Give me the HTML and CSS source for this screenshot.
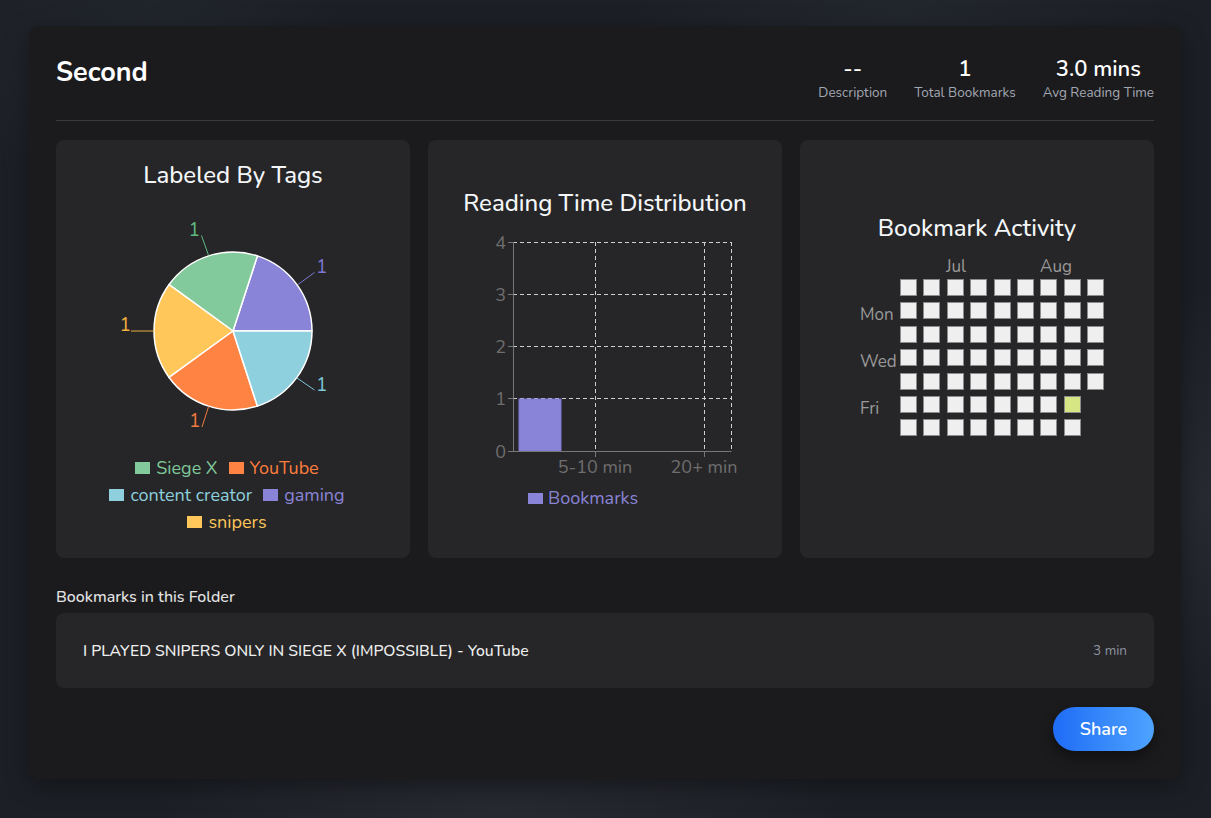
FILE: index.html
```html
<!DOCTYPE html>
<html lang="en">
<head>
<meta charset="utf-8">
<title>Second</title>
<link rel="stylesheet" href="styles.css">
</head>
<body>
<div class="page">
  <main class="panel">
    <header class="header">
      <h1 class="folder-title">Second</h1>
      <div class="stats">
        <div class="stat"><div class="stat-value">--</div><div class="stat-label">Description</div></div>
        <div class="stat"><div class="stat-value">1</div><div class="stat-label">Total Bookmarks</div></div>
        <div class="stat"><div class="stat-value">3.0 mins</div><div class="stat-label">Avg Reading Time</div></div>
      </div>
    </header>

    <section class="cards">
      <div class="card card-tags">
        <h2 class="card-title">Labeled By Tags</h2>
        <svg class="pie" width="354" height="262" viewBox="0 0 354 262">
          <g stroke="#ffffff" stroke-width="1.5" stroke-linejoin="round">
            <path d="M177,144 L256,144 A79,79 0 0 0 201.41,68.87 Z" fill="#8a84d8"/>
            <path d="M177,144 L201.41,68.87 A79,79 0 0 0 113.09,97.56 Z" fill="#82c99c"/>
            <path d="M177,144 L113.09,97.56 A79,79 0 0 0 113.09,190.44 Z" fill="#ffc75a"/>
            <path d="M177,144 L113.09,190.44 A79,79 0 0 0 201.41,219.13 Z" fill="#ff8443"/>
            <path d="M177,144 L201.41,219.13 A79,79 0 0 0 256,144 Z" fill="#8ed0de"/>
          </g>
          <g fill="none" stroke-width="1">
            <polyline points="242,97.5 258.5,85.5" stroke="#7d76d0"/>
            <polyline points="152.6,68.5 145.5,48.5" stroke="#5fbb80"/>
            <polyline points="98,144 75,144" stroke="#e9ad3e"/>
            <polyline points="152.6,219.5 146,240" stroke="#f07a3f"/>
            <polyline points="241,191 258.5,203" stroke="#7cc7d8"/>
          </g>
          <g class="pie-num">
            <text x="260" y="85.5" fill="#7d76d0">1</text>
            <text x="144" y="48.5" fill="#5fbb80" text-anchor="end">1</text>
            <text x="75" y="144" fill="#f2b23f" text-anchor="end">1</text>
            <text x="144.5" y="240" fill="#f07a3f" text-anchor="end">1</text>
            <text x="260" y="204" fill="#7cc7d8">1</text>
          </g>
        </svg>
        <div class="legend">
          <div class="legend-row">
            <span class="legend-item c-green"><i class="swatch"></i>Siege X</span>
            <span class="legend-item c-orange"><i class="swatch"></i>YouTube</span>
          </div>
          <div class="legend-row">
            <span class="legend-item c-cyan"><i class="swatch"></i>content creator</span>
            <span class="legend-item c-purple"><i class="swatch"></i>gaming</span>
          </div>
          <div class="legend-row">
            <span class="legend-item c-yellow"><i class="swatch"></i>snipers</span>
          </div>
        </div>
      </div>

      <div class="card card-reading">
        <h2 class="card-title">Reading Time Distribution</h2>
        <svg class="bar" width="354" height="300" viewBox="0 0 354 300">
          <g stroke="#cfcfcf" stroke-width="1" stroke-dasharray="4 3" fill="none">
            <line x1="85" y1="27.5" x2="303.5" y2="27.5"/>
            <line x1="85" y1="79.5" x2="303.5" y2="79.5"/>
            <line x1="85" y1="131.5" x2="303.5" y2="131.5"/>
            <line x1="85" y1="183.5" x2="303.5" y2="183.5"/>
            <line x1="167.5" y1="27" x2="167.5" y2="236"/>
            <line x1="276.5" y1="27" x2="276.5" y2="236"/>
            <line x1="303.5" y1="27" x2="303.5" y2="236"/>
          </g>
          <rect x="91" y="184" width="42" height="52" fill="#8a84d8" stroke="#7f79d0" stroke-width="1"/>
          <g stroke="#777777" stroke-width="1" fill="none">
            <line x1="85.5" y1="27" x2="85.5" y2="236.5"/>
            <line x1="85" y1="236.5" x2="303.5" y2="236.5"/>
            <line x1="80" y1="27.5" x2="85" y2="27.5"/>
            <line x1="80" y1="79.5" x2="85" y2="79.5"/>
            <line x1="80" y1="131.5" x2="85" y2="131.5"/>
            <line x1="80" y1="183.5" x2="85" y2="183.5"/>
            <line x1="80" y1="236.5" x2="85" y2="236.5"/>
            <line x1="167.5" y1="236" x2="167.5" y2="242"/>
            <line x1="276.5" y1="236" x2="276.5" y2="242"/>
          </g>
          <g class="axis-text" text-anchor="end">
            <text x="78" y="34">4</text>
            <text x="78" y="86">3</text>
            <text x="78" y="138">2</text>
            <text x="78" y="190">1</text>
            <text x="78" y="243">0</text>
          </g>
          <g class="axis-text" text-anchor="middle">
            <text x="167" y="258">5-10 min</text>
            <text x="276" y="258">20+ min</text>
          </g>
          <rect x="100" y="278" width="15" height="11" fill="#8a84d8"/>
          <text class="bar-legend" x="120" y="289">Bookmarks</text>
        </svg>
      </div>

      <div class="card card-activity">
        <h2 class="card-title">Bookmark Activity</h2>
        <div class="heatmap">
          <div class="months">
            <span class="month m-jul">Jul</span>
            <span class="month m-aug">Aug</span>
          </div>
          <div class="heat-body">
            <div class="days">
              <span></span><span>Mon</span><span></span><span>Wed</span><span></span><span>Fri</span><span></span>
            </div>
            <div class="cells">
              <i></i><i></i><i></i><i></i><i></i><i></i><i></i><i></i><i></i>
              <i></i><i></i><i></i><i></i><i></i><i></i><i></i><i></i><i></i>
              <i></i><i></i><i></i><i></i><i></i><i></i><i></i><i></i><i></i>
              <i></i><i></i><i></i><i></i><i></i><i></i><i></i><i></i><i></i>
              <i></i><i></i><i></i><i></i><i></i><i></i><i></i><i></i><i></i>
              <i></i><i></i><i></i><i></i><i></i><i></i><i></i><i class="hot"></i><b></b>
              <i></i><i></i><i></i><i></i><i></i><i></i><i></i><i></i><b></b>
            </div>
          </div>
        </div>
      </div>
    </section>

    <h3 class="list-title">Bookmarks in this Folder</h3>
    <ul class="bookmarks">
      <li class="bookmark">
        <span class="bookmark-title">I PLAYED SNIPERS ONLY IN SIEGE X (IMPOSSIBLE) - YouTube</span>
        <span class="bookmark-time">3 min</span>
      </li>
    </ul>

    <div class="actions">
      <button class="share">Share</button>
    </div>
  </main>
</div>
</body>
</html>
```

FILE: styles.css
```css
* { box-sizing: border-box; }

html, body {
  margin: 0;
  padding: 0;
}

body {
  width: 1211px;
  height: 818px;
  overflow: hidden;
  font-family: "Nunito", "Noto Sans", "Open Sans", sans-serif;
  color: #f2f2f2;
  background-color: #1c1f25;
  background-image:
    radial-gradient(ellipse 300px 200px at 150px 60px, rgba(50,55,66,0.35), transparent 70%),
    radial-gradient(ellipse 400px 160px at 900px 20px, rgba(48,52,62,0.35), transparent 70%),
    radial-gradient(ellipse 500px 120px at 500px 810px, rgba(60,62,70,0.35), transparent 70%),
    radial-gradient(ellipse 120px 300px at 1205px 500px, rgba(55,58,66,0.4), transparent 70%);
}

.page {
  padding: 26px 30px 0 29px;
}

.panel {
  background: #1b1b1d;
  border-radius: 10px;
  padding: 30px 27px 28px;
  box-shadow: 0 6px 24px rgba(0,0,0,0.35);
}

.header {
  display: flex;
  justify-content: space-between;
  align-items: flex-start;
  padding-bottom: 18px;
  border-bottom: 1px solid #3c3c40;
}

.folder-title {
  margin: 0;
  font-size: 27px;
  line-height: 33px;
  font-weight: 700;
  color: #ffffff;
}

.stats {
  display: flex;
  gap: 27px;
  padding-top: 1px;
}

.stat {
  display: flex;
  flex-direction: column;
  align-items: center;
  gap: 3px;
}

.stat-value {
  font-size: 22px;
  line-height: 24px;
  font-weight: 600;
  color: #ffffff;
}

.stat-label {
  font-size: 13.5px;
  line-height: 18px;
  color: #a3a7b3;
}

.cards {
  display: grid;
  grid-template-columns: repeat(3, 1fr);
  gap: 18px;
  margin-top: 19px;
}

.card {
  background: #262628;
  border-radius: 8px;
  height: 418px;
  display: flex;
  flex-direction: column;
  align-items: center;
}

.card-title {
  margin: 0;
  font-size: 24px;
  line-height: 28px;
  font-weight: 500;
  color: #f4f6f8;
  text-align: center;
}

.card-tags { padding-top: 21px; }
.card-reading { padding-top: 49px; }
.card-activity { padding-top: 74px; }

.pie, .bar { display: block; margin-top: -2px; }

.pie-num text {
  font-family: "Nunito", "Noto Sans", "Open Sans", sans-serif;
  font-size: 19px;
}

.legend {
  display: flex;
  flex-direction: column;
  align-items: center;
  margin-top: 5px;
  padding-right: 12px;
}

.legend-row {
  display: flex;
  gap: 11px;
  height: 27px;
  align-items: center;
}

.legend-item {
  display: flex;
  align-items: center;
  gap: 6px;
  font-size: 18px;
  line-height: 22px;
}

.swatch {
  display: block;
  width: 15px;
  height: 12px;
  background: currentColor;
}

.c-green { color: #7fc99a; }
.c-green .swatch { background: #82c99c; }
.c-orange { color: #ff7d3b; }
.c-orange .swatch { background: #ff8443; }
.c-cyan { color: #8ed0de; }
.c-purple { color: #8a84d8; }
.c-yellow { color: #ffc75a; }

.axis-text text {
  font-family: "Nunito", "Noto Sans", "Open Sans", sans-serif;
  font-size: 18px;
  fill: #6e6e6e;
}

.bar-legend {
  font-family: "Nunito", "Noto Sans", "Open Sans", sans-serif;
  font-size: 18px;
  fill: #8a84d8;
}

.heatmap {
  align-self: flex-start;
  margin-left: 60px;
  margin-top: 15px;
}

.months {
  position: relative;
  height: 20px;
  margin-left: 40px;
  margin-bottom: 2px;
}

.month {
  position: absolute;
  top: 0;
  font-size: 17px;
  line-height: 20px;
  color: #9a9a9a;
}

.m-jul { left: 46px; }
.m-aug { left: 140px; }

.heat-body {
  display: flex;
}

.days {
  width: 40px;
  display: grid;
  grid-template-rows: repeat(7, 17px);
  row-gap: 6.4px;
}

.days span {
  font-size: 17px;
  line-height: 17px;
  color: #9a9a9a;
  padding-top: 4px;
}

.cells {
  display: grid;
  grid-template-columns: repeat(9, 17px);
  grid-template-rows: repeat(7, 17px);
  gap: 6.4px;
}

.cells i {
  display: block;
  background: #efefef;
  border: 1px solid #8c8c8c;
}

.cells i.hot { background: #d6e685; }

.cells b { display: block; }

.list-title {
  margin: 29px 0 6px;
  font-size: 16px;
  line-height: 20px;
  font-weight: 500;
  color: #e3e3e3;
}

.bookmarks {
  list-style: none;
  margin: 0;
  padding: 0;
}

.bookmark {
  display: flex;
  justify-content: space-between;
  align-items: center;
  height: 75px;
  padding: 0 27px;
  background: #262628;
  border-radius: 8px;
}

.bookmark-title {
  font-size: 15.75px;
  font-weight: 500;
  color: #eeeeee;
}

.bookmark-time {
  font-size: 13.5px;
  color: #8f93a0;
}

.actions {
  display: flex;
  justify-content: flex-end;
  margin-top: 19px;
}

.share {
  width: 101px;
  height: 44px;
  border: 0;
  border-radius: 22px;
  background: linear-gradient(90deg, #1f6cf6, #4ea3ff);
  color: #ffffff;
  font-family: "Nunito", "Noto Sans", "Open Sans", sans-serif;
  font-size: 18px;
  font-weight: 600;
  box-shadow: 0 6px 14px rgba(0,0,0,0.45);
}
```
